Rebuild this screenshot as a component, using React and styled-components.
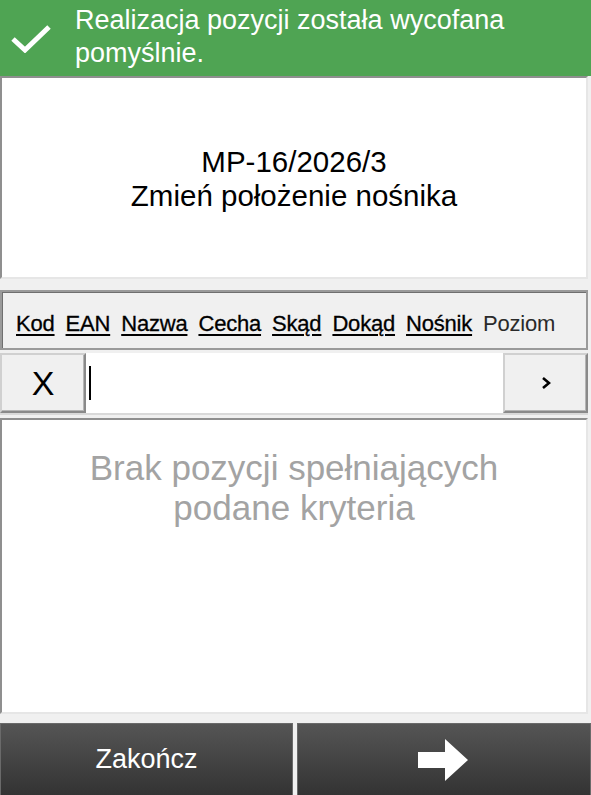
import React from 'react';
import styled, { createGlobalStyle } from 'styled-components';

const Global = createGlobalStyle`
    html, body {
        margin: 0;
        padding: 0;
        background: #f0f0f0;
    }
    * {
        box-sizing: border-box;
    }
`;

const Screen = styled.div`
    width: 591px;
    height: 795px;
    display: flex;
    flex-direction: column;
    background: #f0f0f0;
    font-family: "Liberation Sans", Arial, sans-serif;
    overflow: hidden;
`;

const Toast = styled.div`
    height: 76px;
    flex-shrink: 0;
    background: #4fa453;
    display: flex;
    align-items: center;
    gap: 24px;
    padding-left: 11px;
    color: #fff;
    font-size: 27px;
    line-height: 33px;
`;

const ToastText = styled.div`
    padding-bottom: 2px;
`;

const Sunken = styled.div`
    margin-right: 3px;
    background: #fff;
    border-style: solid;
    border-width: 2px;
    border-color: #8f8f8f #e6e6e6 #e6e6e6 #8f8f8f;
`;

const TitlePanel = styled(Sunken)`
    height: 203px;
    flex-shrink: 0;
    display: flex;
    flex-direction: column;
    align-items: center;
    justify-content: center;
    font-size: 29.5px;
    line-height: 34px;
    color: #000;
    padding-top: 2px;
`;

const FilterBar = styled.div`
    margin: 11px 3px 0 0;
    height: 60px;
    flex-shrink: 0;
    border: 2px solid #9a9a9a;
    box-shadow: inset 1px 1px 0 #6f6f6f;
    display: flex;
    align-items: flex-end;
    gap: 11px;
    padding: 0 0 11px 14px;
    font-size: 22px;
`;

const FilterLink = styled.span`
    color: ${({ plain }) => (plain ? '#2a2a2a' : '#000')};
    text-decoration: ${({ plain }) => (plain ? 'none' : 'underline')};
    -webkit-text-stroke: ${({ plain }) => (plain ? '0' : '0.3px #000')};
    text-underline-offset: 3px;
    text-decoration-thickness: 1.5px;
    letter-spacing: -0.2px;
`;

const SearchRow = styled.div`
    margin: 3px 3px 0 0;
    height: 62px;
    flex-shrink: 0;
    display: flex;
    background: #fff;
    border-bottom: 2px solid #d9d9d9;
`;

const RowButton = styled.div`
    width: ${({ w }) => w}px;
    flex-shrink: 0;
    background: #f0f0f0;
    border-style: solid;
    border-width: 2px;
    border-color: #d0d0d0 #8a8a8a #8a8a8a #d0d0d0;
    box-shadow: inset -1px -1px 0 #b5b5b5;
    display: flex;
    align-items: center;
    justify-content: center;
    color: #000;
    font-size: 34px;
`;

const Field = styled.div`
    flex: 1;
    display: flex;
    align-items: center;
    padding-left: 3px;
`;

const Caret = styled.div`
    width: 2px;
    height: 34px;
    background: #000;
`;

const ListPanel = styled(Sunken)`
    margin-top: 3px;
    height: 296px;
    flex-shrink: 0;
    display: flex;
    flex-direction: column;
    align-items: center;
    padding-top: 28px;
    color: #a3a3a3;
    font-size: 35px;
    line-height: 40px;
    text-align: center;
`;

const Footer = styled.div`
    margin-top: auto;
    height: 72px;
    display: flex;
    gap: 4px;
`;

const FooterButton = styled.div`
    flex: ${({ grow }) => grow};
    background: linear-gradient(#555555, #333333);
    border: 1px solid #6a6a6a;
    border-bottom: none;
    display: flex;
    align-items: center;
    justify-content: center;
    color: #fff;
    font-size: 27px;
`;

const Check = () => (
    <svg width="40" height="30" viewBox="0 0 40 30">
        <path d="M2 16 L14 27 L38 4" fill="none" stroke="#fff" strokeWidth="5" strokeLinejoin="miter" />
    </svg>
);

const Chevron = () => (
    <svg width="10" height="14" viewBox="0 0 10 14">
        <path d="M2 2 L8 7 L2 12" fill="none" stroke="#000" strokeWidth="2.6" />
    </svg>
);

const Arrow = () => (
    <svg width="53" height="42" viewBox="0 0 53 42">
        <path d="M0 13 H27 V0 L50 21 L27 42 V29 H0 Z" fill="#fff" />
    </svg>
);

const filters = ['Kod', 'EAN', 'Nazwa', 'Cecha', 'Skąd', 'Dokąd', 'Nośnik'];

export default function App() {
    return (
        <Screen>
            <Global />
            <Toast>
                <Check />
                <ToastText>
                    Realizacja pozycji została wycofana<br />pomyślnie.
                </ToastText>
            </Toast>
            <TitlePanel>
                <div>MP-16/2026/3</div>
                <div>Zmień położenie nośnika</div>
            </TitlePanel>
            <FilterBar>
                {filters.map((f) => (
                    <FilterLink key={f}>{f}</FilterLink>
                ))}
                <FilterLink plain>Poziom</FilterLink>
            </FilterBar>
            <SearchRow>
                <RowButton w={86}>X</RowButton>
                <Field>
                    <Caret />
                </Field>
                <RowButton w={85}>
                    <Chevron />
                </RowButton>
            </SearchRow>
            <ListPanel>
                <div>Brak pozycji spełniających</div>
                <div>podane kryteria</div>
            </ListPanel>
            <Footer>
                <FooterButton grow={293}>Zakończ</FooterButton>
                <FooterButton grow={294}>
                    <Arrow />
                </FooterButton>
            </Footer>
        </Screen>
    );
}
